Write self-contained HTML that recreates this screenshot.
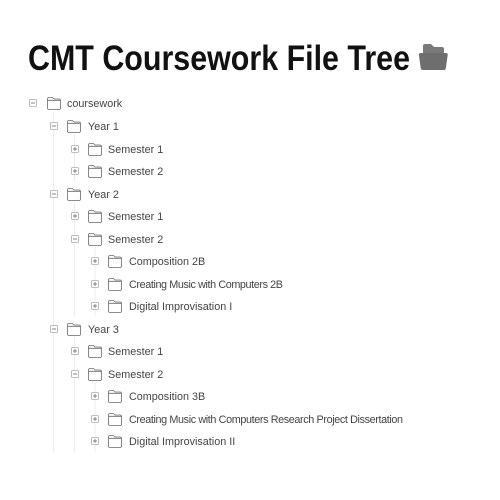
<!DOCTYPE html>
<html><head><meta charset="utf-8"><style>
html,body{margin:0;padding:0;background:#fff;width:500px;height:500px;overflow:hidden}
svg{display:block}
text{font-family:"Liberation Sans",sans-serif}
.l{font-size:10.8px;fill:#444}
.b{fill:#fff;stroke:#aaa;stroke-width:0.8}
.s{stroke:#777;stroke-width:0.9}
.f{fill:none;stroke:#6a6a6a;stroke-width:0.8}
.g{stroke:#ececec;stroke-width:1}
</style></head><body>
<svg width="500" height="500" viewBox="0 0 500 500">
<text x="28" y="70" font-size="35" font-weight="bold" fill="#111" textLength="382" lengthAdjust="spacingAndGlyphs">CMT Coursework File Tree</text>
<path d="M423 46 q0-2 2-2 h6 l3 3 h8 q2 0 2 2 v4 h-21z" fill="#7a7a7a"/>
<path d="M421 53 h25 q2 0 1.7 2 l-1.8 13 q-0.3 2-2 2 h-21 q-2 0-2.2-2 l-1.8-13 q-0.3-2 2.1-2z" fill="#6e6e6e"/>
<line class="g" x1="53.5" y1="112" x2="53.5" y2="452"/>
<line class="g" x1="74.5" y1="134" x2="74.5" y2="182"/>
<line class="g" x1="74.5" y1="202" x2="74.5" y2="316"/>
<line class="g" x1="95" y1="247" x2="95" y2="316"/>
<line class="g" x1="74.5" y1="337" x2="74.5" y2="452"/>
<line class="g" x1="95" y1="382" x2="95" y2="452"/>
<defs>
<g id="minus"><rect class="b" x="0.5" y="0.5" width="7" height="7" rx="1"/><line class="s" x1="2" y1="4" x2="6" y2="4"/></g>
<g id="plus"><rect class="b" x="0.5" y="0.5" width="7" height="7" rx="1"/><line class="s" x1="2" y1="4" x2="6" y2="4"/><line class="s" x1="4" y1="2" x2="4" y2="6"/></g>
<g id="fold"><path class="f" d="M0.5 2 q0-1.5 1.5-1.5 h3.5 l1.5 1.5 h5 q1.5 0 1.5 1.5 v7.5 q0 1.5-1.5 1.5 h-10 q-1.5 0-1.5-1.5z M0.5 3.3 h13"/></g>
</defs>
<use href="#minus" x="29" y="99"/><use href="#fold" x="47" y="97"/><text class="l" x="67" y="107">coursework</text>
<use href="#minus" x="50" y="122"/><use href="#fold" x="67" y="120"/><text class="l" x="88" y="130">Year 1</text>
<use href="#plus" x="71" y="145"/><use href="#fold" x="88" y="143"/><text class="l" x="108" y="153">Semester 1</text>
<use href="#plus" x="71" y="167"/><use href="#fold" x="88" y="165"/><text class="l" x="108" y="175">Semester 2</text>
<use href="#minus" x="50" y="190"/><use href="#fold" x="67" y="188"/><text class="l" x="88" y="198">Year 2</text>
<use href="#plus" x="71" y="212"/><use href="#fold" x="88" y="210"/><text class="l" x="108" y="220">Semester 1</text>
<use href="#minus" x="71" y="235"/><use href="#fold" x="88" y="233"/><text class="l" x="108" y="243">Semester 2</text>
<use href="#plus" x="91" y="257"/><use href="#fold" x="108" y="255"/><text class="l" x="129" y="265">Composition 2B</text>
<use href="#plus" x="91" y="280"/><use href="#fold" x="108" y="278"/><text class="l" x="129" y="288" textLength="154">Creating Music with Computers 2B</text>
<use href="#plus" x="91" y="302"/><use href="#fold" x="108" y="300"/><text class="l" x="129" y="310">Digital Improvisation I</text>
<use href="#minus" x="50" y="325"/><use href="#fold" x="67" y="323"/><text class="l" x="88" y="333">Year 3</text>
<use href="#plus" x="71" y="347"/><use href="#fold" x="88" y="345"/><text class="l" x="108" y="355">Semester 1</text>
<use href="#minus" x="71" y="370"/><use href="#fold" x="88" y="368"/><text class="l" x="108" y="378">Semester 2</text>
<use href="#plus" x="91" y="392"/><use href="#fold" x="108" y="390"/><text class="l" x="129" y="400">Composition 3B</text>
<use href="#plus" x="91" y="415"/><use href="#fold" x="108" y="413"/><text class="l" x="129" y="423" textLength="274">Creating Music with Computers Research Project Dissertation</text>
<use href="#plus" x="91" y="437"/><use href="#fold" x="108" y="435"/><text class="l" x="129" y="445">Digital Improvisation II</text>
</svg>
</body></html>
